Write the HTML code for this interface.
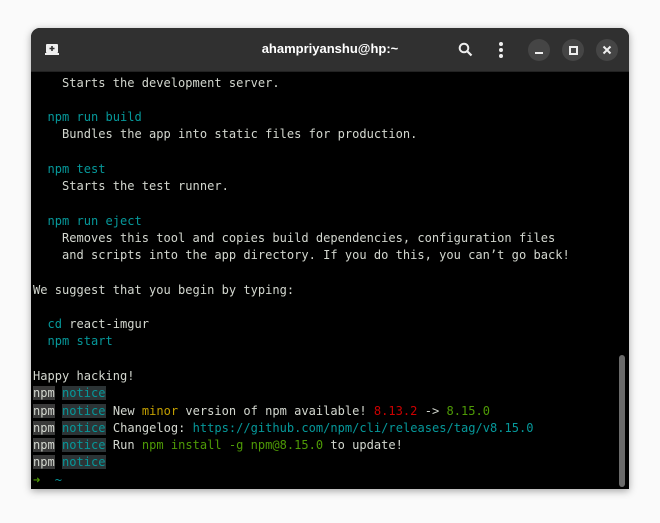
<!DOCTYPE html>
<html><head><style>
body{margin:0;width:660px;height:523px;background:#fafafa;position:relative;overflow:hidden}
.win{position:absolute;left:31px;top:28px;width:598px;height:461px;background:#000;border-radius:9px 9px 0 0;box-shadow:0 2px 8px rgba(0,0,0,.35);overflow:hidden}
.hd{position:absolute;left:0;top:0;width:598px;height:43px;background:#303030;border-bottom:1px solid #222}
.title{position:absolute;left:0;right:0;top:13px;text-align:center;color:#fff;font:bold 13px "Liberation Sans",sans-serif}
.cb{position:absolute;top:11px;width:22px;height:22px;border-radius:50%;background:#454545}
.term{position:absolute;left:2px;top:46.5px;font:12.05px/17.26px "DejaVu Sans Mono",monospace;color:#d3d7cf;white-space:pre}
.c{color:#06989a}.g{color:#4e9a06}.y{color:#c4a000}.r{color:#cc0000}
.n{background:#3a3a3a}.t{background:#2c3436;color:#06989a}
.sb{position:absolute;left:588px;top:327px;width:6px;height:132px;background:#6a6a6a;border-radius:3px}
</style></head><body>
<div class="win">
<div class="hd">
<svg style="position:absolute;left:14px;top:15px" width="14" height="13"><rect x="1" y="1" width="12" height="9" rx="1" fill="#eee"/><rect x="0" y="10" width="14" height="2" fill="#eee"/><path d="M7 3v5M4.5 5.5h5" stroke="#303030" stroke-width="1.6"/></svg>
<div class="title">ahampriyanshu@hp:~</div>
<svg style="position:absolute;left:427px;top:14px" width="15" height="15"><circle cx="6" cy="6" r="4.3" stroke="#eee" stroke-width="2" fill="none"/><path d="M9 9l4.5 4.5" stroke="#eee" stroke-width="2.2"/></svg>
<svg style="position:absolute;left:467px;top:13px" width="6" height="18"><circle cx="3" cy="3" r="2" fill="#eee"/><circle cx="3" cy="9" r="2" fill="#eee"/><circle cx="3" cy="15" r="2" fill="#eee"/></svg>
<div class="cb" style="left:497px"><div style="position:absolute;left:7px;top:13px;width:8px;height:2px;background:#eee"></div></div>
<div class="cb" style="left:531px"><div style="position:absolute;left:7px;top:7px;width:5px;height:5px;border:2px solid #eee"></div></div>
<div class="cb" style="left:565px"><svg width="22" height="22"><path d="M7.5 7.5l7 7M14.5 7.5l-7 7" stroke="#eee" stroke-width="2"/></svg></div>
</div>
<div class="term">    Starts the development server.

  <span class="c">npm run build</span>
    Bundles the app into static files for production.

  <span class="c">npm test</span>
    Starts the test runner.

  <span class="c">npm run eject</span>
    Removes this tool and copies build dependencies, configuration files
    and scripts into the app directory. If you do this, you can’t go back!

We suggest that you begin by typing:

  <span class="c">cd</span> react-imgur
  <span class="c">npm start</span>

Happy hacking!
<span class="n">npm</span> <span class="t">notice</span>
<span class="n">npm</span> <span class="t">notice</span> New <span class="y">minor</span> version of npm available! <span class="r">8.13.2</span> -> <span class="g">8.15.0</span>
<span class="n">npm</span> <span class="t">notice</span> Changelog: <span class="c">https://github.com/npm/cli/releases/tag/v8.15.0</span>
<span class="n">npm</span> <span class="t">notice</span> Run <span class="g">npm install -g npm@8.15.0</span> to update!
<span class="n">npm</span> <span class="t">notice</span>
<span class="g">➜</span>  <span class="c">~</span></div>
<div class="sb"></div>
</div>
</body></html>
